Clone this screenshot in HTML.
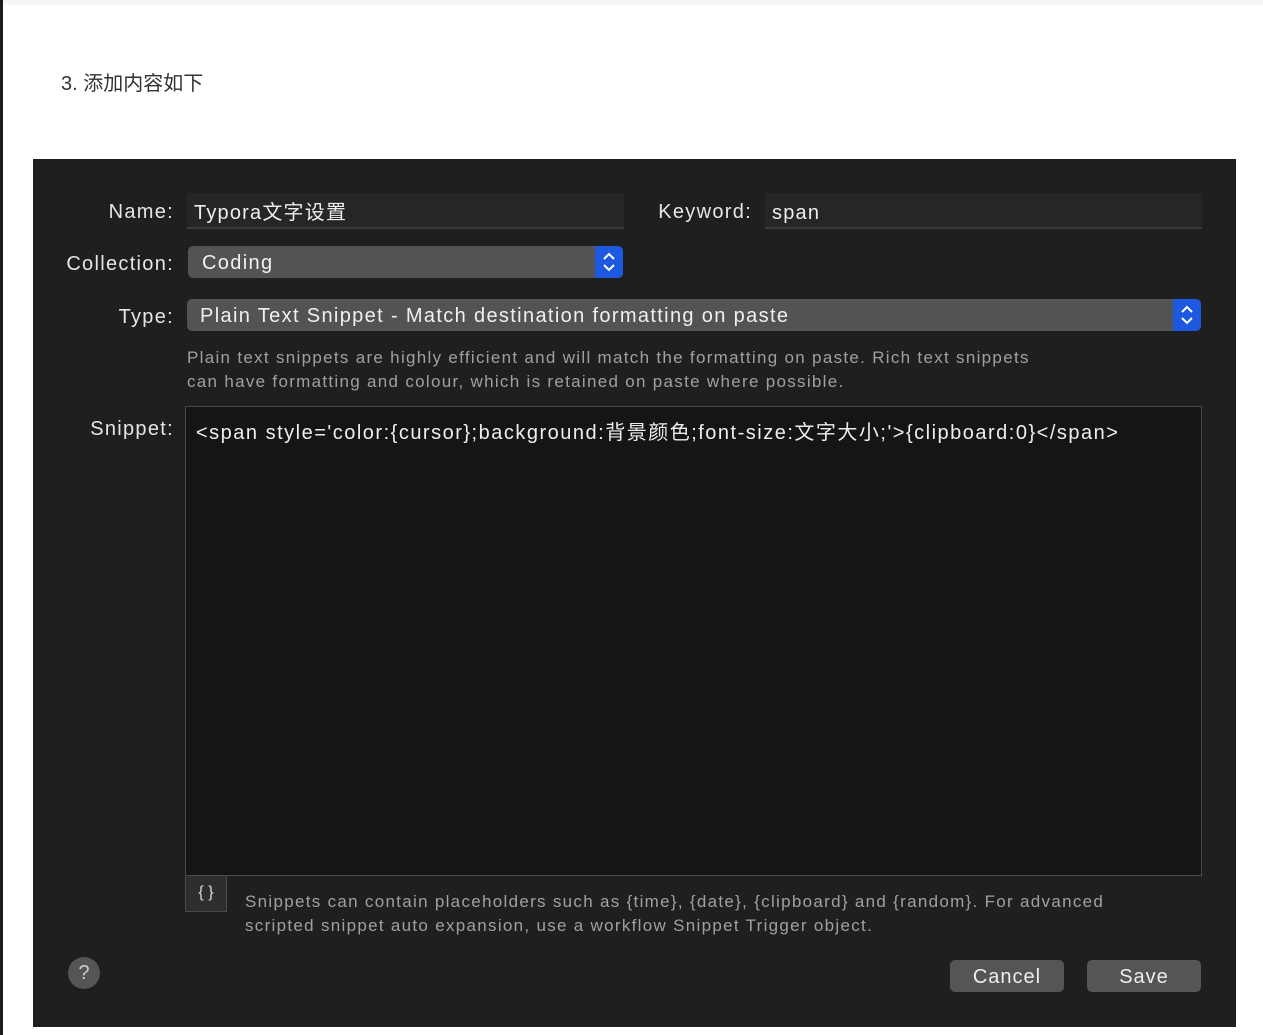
<!DOCTYPE html>
<html><head><meta charset="utf-8"><style>
*{margin:0;padding:0;box-sizing:border-box}
body{width:1263px;height:1035px;background:#fff;position:relative;overflow:hidden;font-family:"Liberation Sans","Noto Sans CJK SC",sans-serif}
.strip{position:absolute;left:0;top:0;width:3px;height:1035px;background:#1b1b1d}
.topline{position:absolute;left:3px;top:0;right:0;height:5px;background:#f6f6f6}
.h{position:absolute;left:61px;top:67px;font-size:20px;color:#333}
.dlg{position:absolute;left:33px;top:159px;width:1203px;height:868px;background:#1f1f1f;color:#ddd}
.a{position:absolute}
.lbl{font-size:20px;color:#e6e6e6;text-align:right;letter-spacing:1.3px}
.field{background:#262626;border-bottom:2px solid #3a3a3a;font-size:20px;color:#eee;padding-left:7px;line-height:40px;letter-spacing:1.2px}
.pop{background:#535353;border-radius:5px;font-size:20px;color:#f0f0f0;line-height:34px;letter-spacing:1.35px}
.step{position:absolute;right:0;top:0;width:28px;height:32px;background:#1d58e0;border-radius:0 5px 5px 0}
.help{font-size:17px;color:#a0a0a0;line-height:24px;letter-spacing:1.3px}
.btn{background:#555;border-radius:5px;font-size:20px;color:#eee;text-align:center;line-height:34px;letter-spacing:1px}
</style></head><body>
<div class="strip"></div><div class="topline"></div>
<div class="h">3. 添加内容如下</div>
<div class="dlg">
<div class="a lbl" style="left:0;width:141px;top:42px">Name:</div>
<div class="a field" style="left:154px;top:34px;width:437px;height:36px">Typora文字设置</div>
<div class="a lbl" style="left:560px;width:159px;top:42px">Keyword:</div>
<div class="a field" style="left:732px;top:34px;width:437px;height:36px">span</div>
<div class="a lbl" style="left:0;width:141px;top:94px">Collection:</div>
<div class="a pop" style="left:155px;top:87px;width:435px;height:32px;padding-left:14px">Coding<div class="step"><svg width="28" height="32" viewBox="0 0 28 32"><path d="M9 13l5-5 5 5M9 19l5 5 5-5" stroke="#fff" stroke-width="2" fill="none"/></svg></div></div>
<div class="a lbl" style="left:0;width:141px;top:147px">Type:</div>
<div class="a pop" style="left:154px;top:140px;width:1014px;height:32px;padding-left:13px">Plain Text Snippet - Match destination formatting on paste<div class="step"><svg width="28" height="32" viewBox="0 0 28 32"><path d="M9 13l5-5 5 5M9 19l5 5 5-5" stroke="#fff" stroke-width="2" fill="none"/></svg></div></div>
<div class="a help" style="left:154px;top:187px">Plain text snippets are highly efficient and will match the formatting on paste. Rich text snippets<br>can have formatting and colour, which is retained on paste where possible.</div>
<div class="a lbl" style="left:0;width:141px;top:259px">Snippet:</div>
<div class="a" style="left:152px;top:247px;width:1017px;height:470px;background:#151515;border:1px solid #4a4a4a;font-size:20px;color:#eee;padding:9px 0 0 10px;letter-spacing:1.5px">&lt;span style='color:{cursor};background:背景颜色;font-size:文字大小;'&gt;{clipboard:0}&lt;/span&gt;</div>
<div class="a" style="left:152px;top:717px;width:42px;height:36px;background:#2e2e2e;border:1px solid #4a4a4a;border-top:none;color:#ddd;font-size:16px;text-align:center;line-height:34px">{ }</div>
<div class="a help" style="left:212px;top:731px">Snippets can contain placeholders such as {time}, {date}, {clipboard} and {random}. For advanced<br>scripted snippet auto expansion, use a workflow Snippet Trigger object.</div>
<div class="a" style="left:35px;top:798px;width:32px;height:32px;border-radius:50%;background:#555;color:#ccc;font-size:20px;text-align:center;line-height:32px">?</div>
<div class="a btn" style="left:917px;top:801px;width:114px;height:32px">Cancel</div>
<div class="a btn" style="left:1054px;top:801px;width:114px;height:32px">Save</div>
</div>
</body></html>
